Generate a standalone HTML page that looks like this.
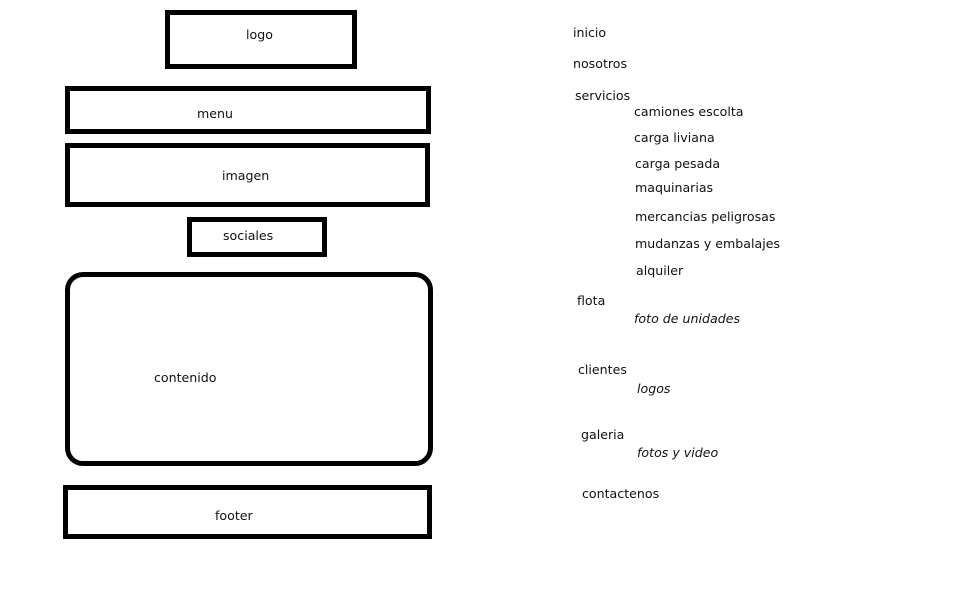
<!DOCTYPE html><html><head><style>
body{margin:0;width:954px;height:594px;background:#fff;position:relative;overflow:hidden;font-family:"DejaVu Sans","Liberation Sans",sans-serif;font-size:12.6px;color:#111}
.b{position:absolute;border:5px solid #000;box-sizing:border-box}
.t{position:absolute;line-height:16px;white-space:nowrap;margin-top:2px}
i{font-style:italic}
</style></head><body>
<div class="b" style="left:165px;top:10px;width:192px;height:59px"></div>
<div class="b" style="left:65px;top:86px;width:366px;height:48px"></div>
<div class="b" style="left:65px;top:143px;width:365px;height:64px"></div>
<div class="b" style="left:187px;top:217px;width:140px;height:40px"></div>
<div class="b" style="left:65px;top:272px;width:368px;height:194px;border-radius:18px"></div>
<div class="b" style="left:63px;top:485px;width:369px;height:54px"></div>
<div class="t" style="left:246px;top:25px">logo</div>
<div class="t" style="left:197px;top:104px">menu</div>
<div class="t" style="left:222px;top:166px">imagen</div>
<div class="t" style="left:223px;top:226px">sociales</div>
<div class="t" style="left:154px;top:368px">contenido</div>
<div class="t" style="left:215px;top:506px">footer</div>
<div class="t" style="left:573px;top:23px">inicio</div>
<div class="t" style="left:573px;top:54px">nosotros</div>
<div class="t" style="left:575px;top:86px">servicios</div>
<div class="t" style="left:634px;top:102px">camiones escolta</div>
<div class="t" style="left:634px;top:128px">carga liviana</div>
<div class="t" style="left:635px;top:154px">carga pesada</div>
<div class="t" style="left:635px;top:178px">maquinarias</div>
<div class="t" style="left:635px;top:207px">mercancias peligrosas</div>
<div class="t" style="left:635px;top:234px">mudanzas y embalajes</div>
<div class="t" style="left:636px;top:261px">alquiler</div>
<div class="t" style="left:577px;top:291px">flota</div>
<div class="t" style="left:634px;top:309px"><i>foto de unidades</i></div>
<div class="t" style="left:578px;top:360px">clientes</div>
<div class="t" style="left:637px;top:379px"><i>logos</i></div>
<div class="t" style="left:581px;top:425px">galeria</div>
<div class="t" style="left:637px;top:443px"><i>fotos y video</i></div>
<div class="t" style="left:582px;top:484px">contactenos</div>
</body></html>
